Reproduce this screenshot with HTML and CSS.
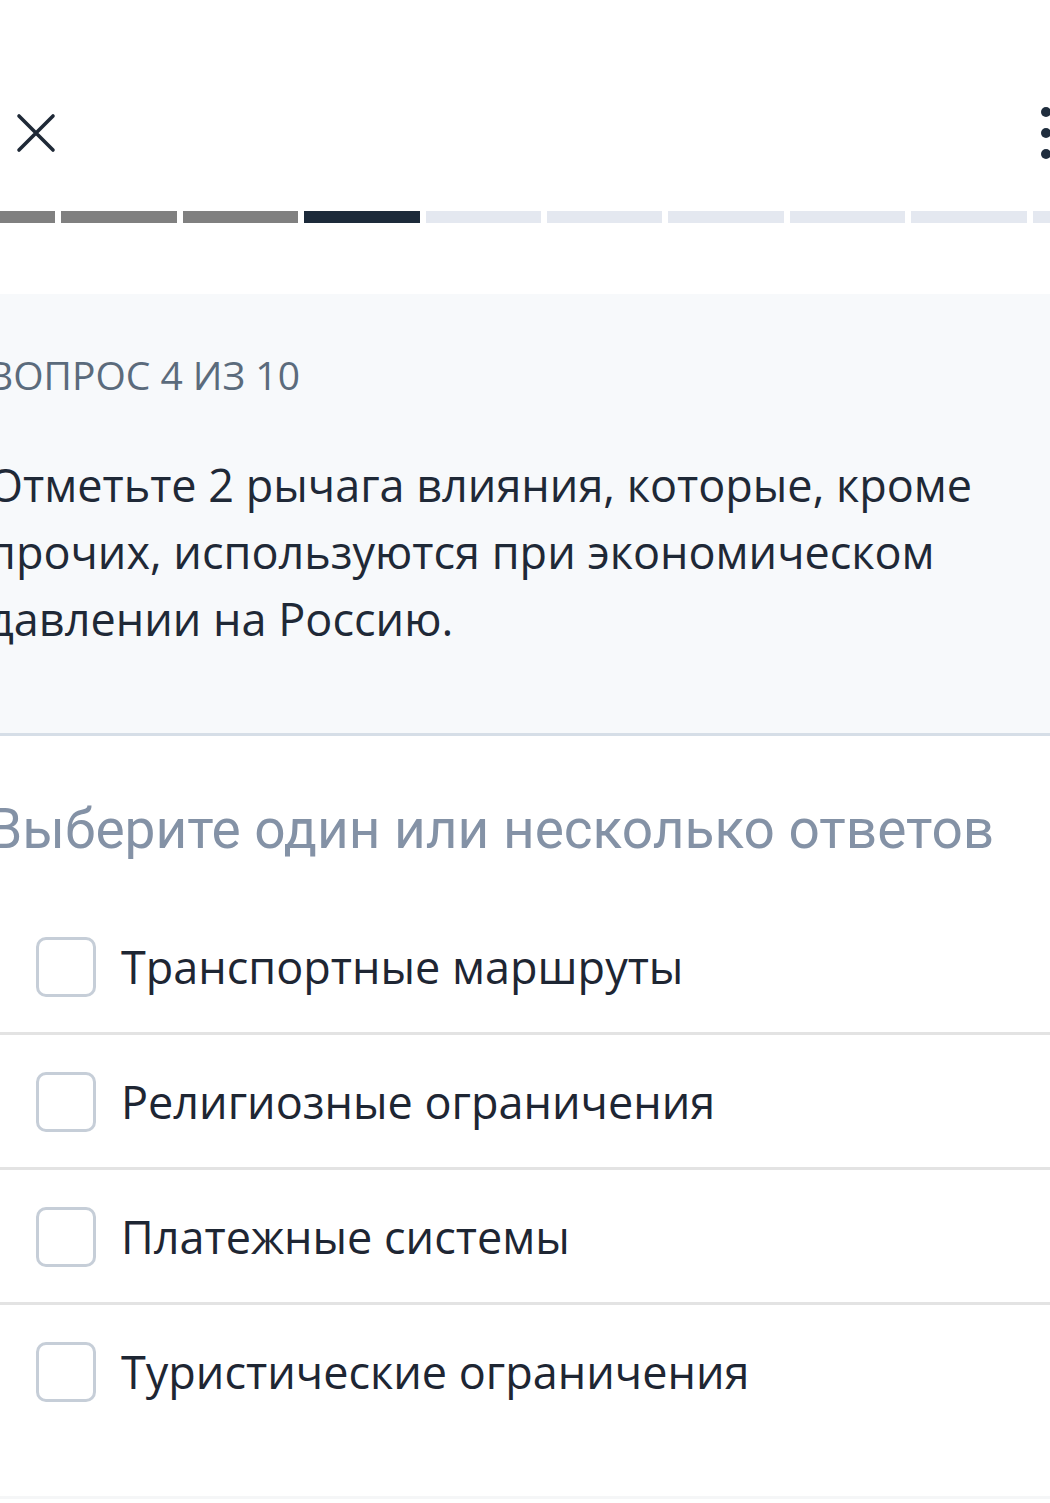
FILE: index.html
```html
<!DOCTYPE html>
<html lang="ru">

<head>
    <meta charset="UTF-8">
    <meta name="viewport" content="width=device-width, initial-scale=1.0">
    <title>Вопрос 4 из 10</title>
    <link rel="stylesheet" href="styles.css">
</head>

<body>
    <div class="screen">
        <div class="topbar">
            <svg class="close" width="40" height="40" viewBox="0 0 40 40">
                <path d="M3 3 L37 37 M37 3 L3 37" stroke="#1f2937" stroke-width="3.6" stroke-linecap="round" fill="none" />
            </svg>
            <svg class="more" width="10" height="52" viewBox="0 0 10 52">
                <circle cx="5" cy="5" r="5" fill="#1f2d3d" />
                <circle cx="5" cy="26" r="5" fill="#1f2d3d" />
                <circle cx="5" cy="47" r="5" fill="#1f2d3d" />
            </svg>
        </div>

        <ul class="progress">
            <li class="done"></li>
            <li class="done"></li>
            <li class="done"></li>
            <li class="current"></li>
            <li></li>
            <li></li>
            <li></li>
            <li></li>
            <li></li>
            <li></li>
        </ul>

        <div class="card">
            <div class="counter">ВОПРОС 4 ИЗ 10</div>
            <div class="question">Отметьте 2 рычага влияния, которые, кроме прочих, используются при экономическом давлении на Россию.</div>
        </div>

        <div class="hint">Выберите один или несколько ответов</div>

        <ul class="answers">
            <li><span class="box"></span>Транспортные маршруты</li>
            <li><span class="box"></span>Религиозные ограничения</li>
            <li><span class="box"></span>Платежные системы</li>
            <li><span class="box"></span>Туристические ограничения</li>
        </ul>
    </div>
</body>

</html>
```

FILE: styles.css
```css
* {
    margin: 0;
    padding: 0;
}

html,
body {
    height: 100%;
    background-color: #fff;
}

body {
    overflow: hidden;
    font-family: "Open Sans", "Noto Sans", sans-serif;
}

ul {
    list-style: none;
}

.screen {
    width: 1208px;
    margin-left: -60px;
}

.topbar {
    display: flex;
    align-items: center;
    justify-content: space-between;
    height: 80px;
    padding: 93px 97px 0 76px;
}

.close,
.more {
    display: block;
}

.progress {
    display: flex;
    gap: 6px;
    margin-top: 38px;
}

.progress li {
    flex: 1;
    height: 12px;
    background-color: #e4e8f0;
}

.progress li.done {
    background-color: #808080;
}

.progress li.current {
    background-color: #1c2a3a;
}

.card {
    margin-top: 71px;
    padding: 55px 60px 81px 48px;
    background-color: #f7f9fb;
    border-bottom: 3px solid #d6dee7;
}

.counter {
    font-size: 39px;
    line-height: 52px;
    color: #5b6b7c;
}

.question {
    margin-top: 50px;
    font-size: 45px;
    line-height: 67px;
    color: #1f2937;
}

.hint {
    margin-top: 60px;
    padding-left: 48px;
    font-family: Roboto, "Liberation Sans", sans-serif;
    font-size: 55px;
    line-height: 67px;
    color: #8492a6;
}

.answers {
    margin-top: 37px;
}

.answers li {
    display: flex;
    align-items: center;
    gap: 25px;
    padding: 37px 0 35px 96px;
    font-size: 45px;
    line-height: 60px;
    color: #1e2633;
    border-bottom: 3px solid #e3e3e3;
}

.answers li:last-child {
    padding-bottom: 94px;
    border-bottom-color: #f5f6f7;
}

.box {
    flex: none;
    width: 54px;
    height: 54px;
    border: 3px solid #c6ced8;
    border-radius: 10px;
    background-color: #fff;
}
```
